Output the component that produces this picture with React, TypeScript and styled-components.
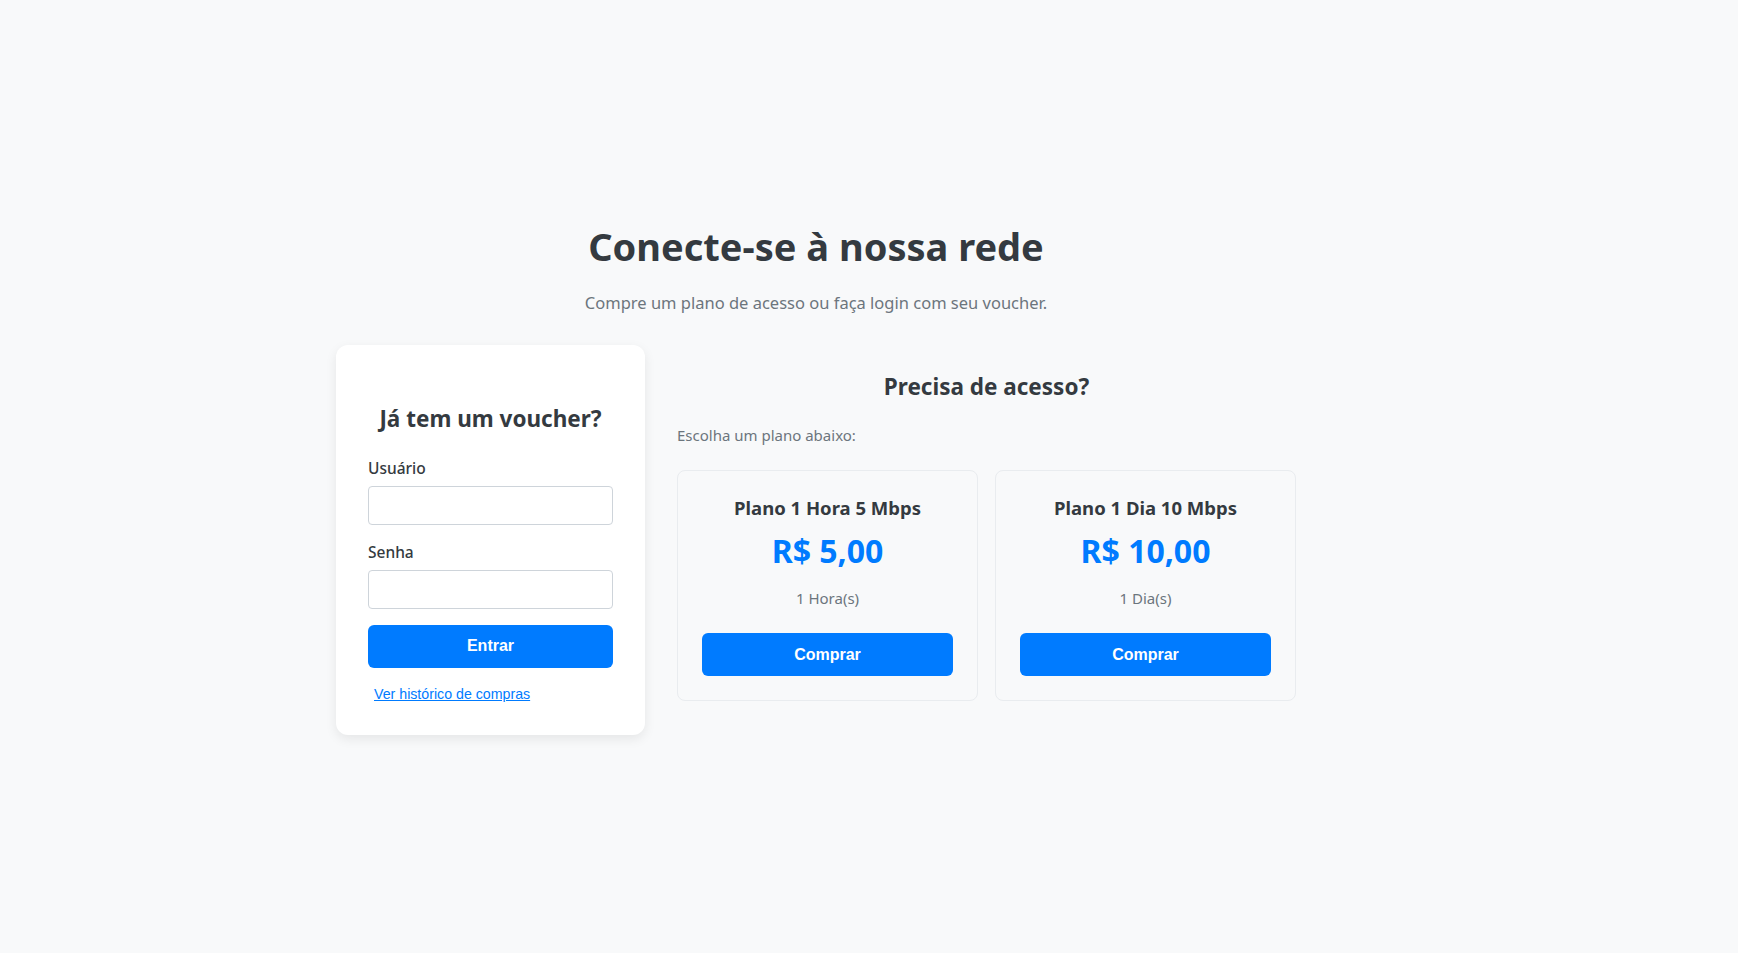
import React from "react";
import styled, {createGlobalStyle} from "styled-components";

const GlobalStyle = createGlobalStyle`
  body {
    margin: 0;
    background: #f8f9fa;
    font-family: "Noto Sans", "Open Sans", sans-serif;
    color: #343a40;
  }
`;

const Page = styled.div`
  min-height: 953px;
  padding-top: 224px;
  box-sizing: border-box;
`;

const Container = styled.div`
  width: 960px;
  margin-left: 336px;
`;

const Header = styled.header`
  text-align: center;
  margin-bottom: 31px;
`;

const Title = styled.h1`
  font-size: 38px;
  font-weight: 700;
  line-height: 1.2;
  margin: 0 0 21px;
  color: #343a40;
`;

const Subtitle = styled.p`
  font-size: 16.5px;
  color: #6c757d;
  margin: 0;
`;

const Content = styled.div`
  display: flex;
  align-items: flex-start;
  gap: 32px;
`;

const VoucherCard = styled.div`
  width: 309px;
  box-sizing: border-box;
  background: #fff;
  border-radius: 12px;
  box-shadow: 0 4px 12px rgba(0, 0, 0, 0.08);
  padding: 58px 32px 31px;
`;

const SectionTitle = styled.h2<{ $mb: number }>`
  font-size: 22.5px;
  font-weight: 700;
  text-align: center;
  margin: 0 0 ${(p) => p.$mb}px;
  color: #343a40;
`;

const Field = styled.div`
  margin-bottom: 16px;
`;

const Label = styled.label`
  display: block;
  font-size: 15.5px;
  font-weight: 500;
  margin-bottom: 7px;
  color: #343a40;
`;

const Input = styled.input`
  display: block;
  width: 100%;
  box-sizing: border-box;
  height: 39px;
  border: 1px solid #ced4da;
  border-radius: 4px;
  background: #fff;
  padding: 0 10px;
  font-size: 15px;
`;

const Button = styled.button`
  display: block;
  width: 100%;
  height: 43px;
  border: none;
  border-radius: 6px;
  background: #007bff;
  color: #fff;
  font-family: "Liberation Sans", Arial, sans-serif;
  font-weight: 700;
  font-size: 16px;
  cursor: pointer;
`;

const HistoryLink = styled.a`
  display: inline-block;
  margin: 18px 0 0 6px;
  font-family: "Liberation Sans", Arial, sans-serif;
  font-size: 14.2px;
  color: #007bff;
  text-decoration: underline;
`;

const PlansColumn = styled.section`
  width: 619px;
  padding-top: 26px;
`;

const Hint = styled.p`
  font-size: 15px;
  color: #6c757d;
  margin: 0 0 25px;
`;

const PlanGrid = styled.div`
  display: grid;
  grid-template-columns: 1fr 1fr;
  gap: 17px;
`;

const PlanCard = styled.div`
  border: 1px solid #e9ecef;
  border-radius: 8px;
  background: #f8f9fa;
  padding: 24px 24px 24px;
  text-align: center;
`;

const PlanName = styled.h3`
  font-size: 18.5px;
  font-weight: 700;
  margin: 0 0 10px;
  color: #343a40;
`;

const Price = styled.div`
  font-size: 32px;
  font-weight: 700;
  color: #007bff;
  line-height: 1.3;
  margin-bottom: 17px;
`;

const Duration = styled.p`
  font-size: 15px;
  color: #6c757d;
  margin: 0 0 25px;
`;

const plans = [
  {name: "Plano 1 Hora 5 Mbps", price: "R$ 5,00", duration: "1 Hora(s)"},
  {name: "Plano 1 Dia 10 Mbps", price: "R$ 10,00", duration: "1 Dia(s)"},
];

const App = () => {
  return (
    <Page>
      <GlobalStyle/>
      <Container>
        <Header>
          <Title>Conecte-se à nossa rede</Title>
          <Subtitle>Compre um plano de acesso ou faça login com seu voucher.</Subtitle>
        </Header>
        <Content>
          <VoucherCard>
            <SectionTitle $mb={23}>Já tem um voucher?</SectionTitle>
            <Field>
              <Label>Usuário</Label>
              <Input type="text"/>
            </Field>
            <Field>
              <Label>Senha</Label>
              <Input type="password"/>
            </Field>
            <Button>Entrar</Button>
            <HistoryLink href="#">Ver histórico de compras</HistoryLink>
          </VoucherCard>
          <PlansColumn>
            <SectionTitle $mb={23}>Precisa de acesso?</SectionTitle>
            <Hint>Escolha um plano abaixo:</Hint>
            <PlanGrid>
              {plans.map((p) => (
                <PlanCard key={p.name}>
                  <PlanName>{p.name}</PlanName>
                  <Price>{p.price}</Price>
                  <Duration>{p.duration}</Duration>
                  <Button>Comprar</Button>
                </PlanCard>
              ))}
            </PlanGrid>
          </PlansColumn>
        </Content>
      </Container>
    </Page>
  );
};

export default App;
